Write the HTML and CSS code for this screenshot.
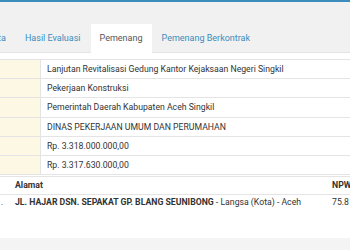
FILE: index.html
```html
<!DOCTYPE html>
<html lang="id">
<head>
  <meta charset="UTF-8" />
  <title>Pemenang</title>
  <link rel="stylesheet" href="styles.css">
</head>
<body>
  <div class="topbar"></div>

  <div class="tabs">
    <ul class="tab-list">
      <li class="tab"><a href="#">Peserta</a></li>
      <li class="tab"><a href="#">Hasil Evaluasi</a></li>
      <li class="tab active"><a href="#">Pemenang</a></li>
      <li class="tab"><a href="#">Pemenang Berkontrak</a></li>
    </ul>
  </div>

  <div class="tab-content">
    <table class="detail">
      <tr><th></th><td>Lanjutan Revitalisasi Gedung Kantor Kejaksaan Negeri Singkil</td></tr>
      <tr><th></th><td>Pekerjaan Konstruksi</td></tr>
      <tr><th></th><td>Pemerintah Daerah Kabupaten Aceh Singkil</td></tr>
      <tr><th></th><td>DINAS PEKERJAAN UMUM DAN PERUMAHAN</td></tr>
      <tr><th></th><td>Rp. 3.318.000.000,00</td></tr>
      <tr><th></th><td>Rp. 3.317.630.000,00</td></tr>
    </table>

    <table class="winner">
      <thead>
        <tr><th class="col-name"></th><th class="col-addr">Alamat</th><th class="col-npwp">NPWP</th></tr>
      </thead>
      <tbody>
        <tr>
          <td class="col-name">.</td>
          <td class="col-addr"><b>JL. HAJAR DSN. SEPAKAT GP. BLANG SEUNIBONG</b> - Langsa (Kota) - Aceh</td>
          <td class="col-npwp">75.8</td>
        </tr>
      </tbody>
    </table>
  </div>

  <div class="box-footer"></div>
</body>
</html>
```

FILE: styles.css
```css
:root {
  --blue: #3c8dbc;
  --text: #333333;
  --line: #e4e4e4;
  --cream: #fcf8e3;
  --gray-bg: #f1f1f1;
}

* {
  box-sizing: border-box;
  margin: 0;
  padding: 0;
}

html, body {
  width: 350px;
  height: 250px;
  overflow: hidden;
}

body {
  background: #ffffff;
  color: var(--text);
  font-family: Roboto, "Liberation Sans", sans-serif;
  font-size: 8.7px;
  display: flex;
  flex-direction: column;
}

.topbar {
  height: 2px;
  background: var(--blue);
}

.tabs {
  background: var(--gray-bg);
  height: 51px;
  border-bottom: 1px solid var(--line);
  display: flex;
  align-items: flex-end;
}

.tab-list {
  list-style: none;
  display: flex;
  gap: 1px;
  margin-left: -34px;
  margin-bottom: -1px;
  font-size: 9px;
}

.tab a {
  display: block;
  padding: 0 9px;
  height: 29px;
  line-height: 28px;
  color: var(--blue);
  text-decoration: none;
  white-space: nowrap;
}

.tab.active a {
  background: #ffffff;
  color: #555555;
}

.tab-content {
  flex: 1;
  padding-top: 6px;
}

table {
  border-collapse: collapse;
  table-layout: fixed;
}

.detail {
  margin-left: -113px;
  width: 620px;
}

.detail th,
.detail td {
  border: 1px solid var(--line);
  padding: 3px 6px;
  line-height: 12.2px;
  text-align: left;
  white-space: nowrap;
}

.detail th {
  width: 153px;
  background: var(--cream);
  font-weight: 400;
}

.winner {
  margin-top: 1px;
  margin-left: -150px;
  width: 700px;
}

.winner th,
.winner td {
  padding: 3px 6px;
  line-height: 11px;
  text-align: left;
  white-space: nowrap;
  border-top: 1px solid var(--line);
}

.winner th {
  font-weight: 700;
  border-bottom: 1px solid var(--line);
}

.winner td {
  padding: 2px 6px 3px;
}

.winner td.col-name {
  text-align: right;
}

.col-name {
  width: 159px;
}

.col-addr {
  width: 317px;
}

.box-footer {
  height: 12px;
  background: #f4f4f4;
}
```
